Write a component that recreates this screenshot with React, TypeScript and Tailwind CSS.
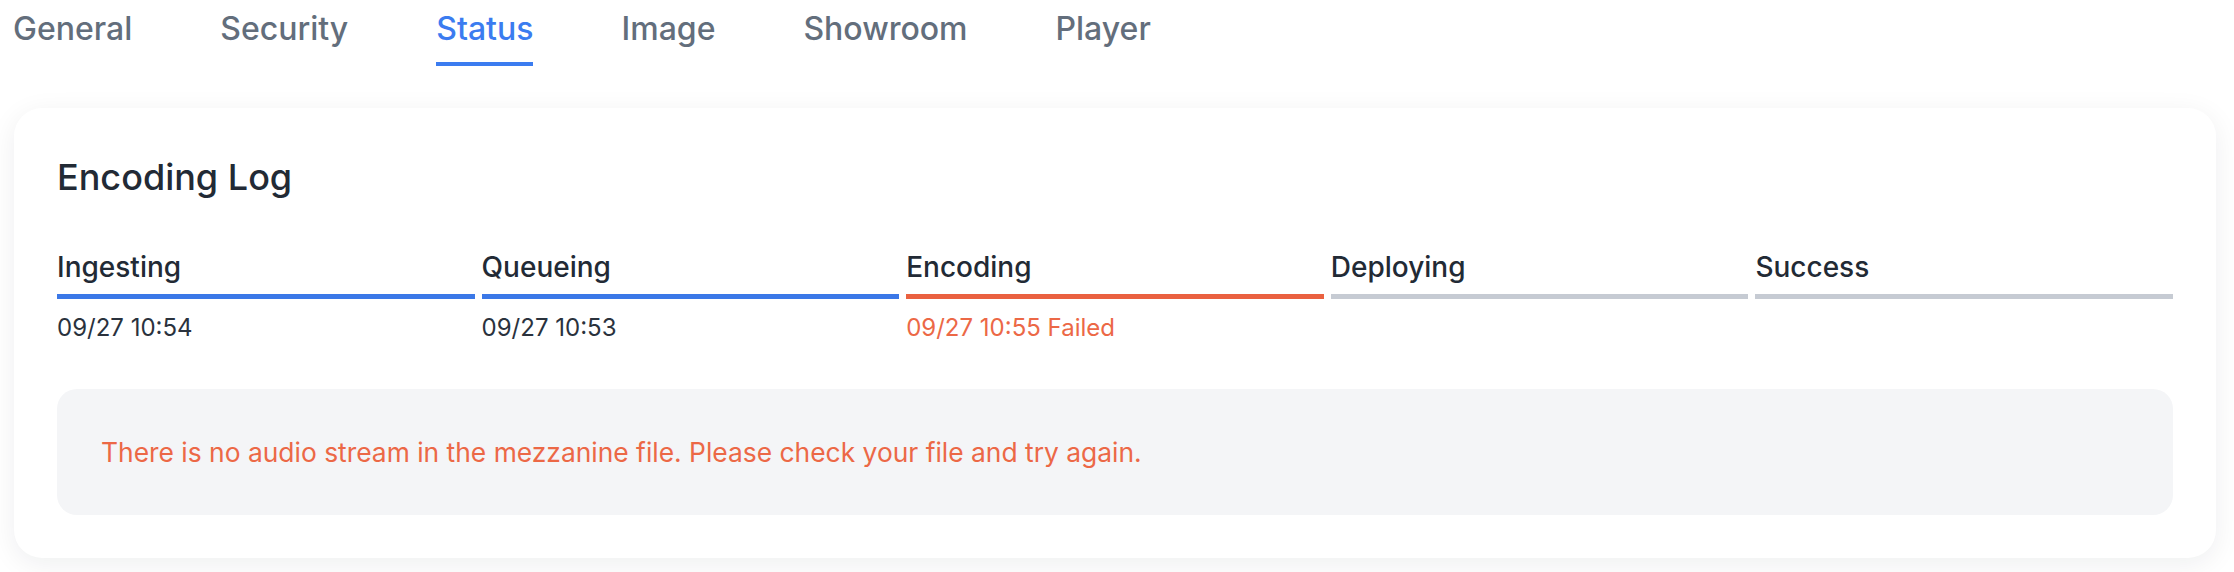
import React from "react";

type Step = {
  label: string;
  time?: string;
  state: "done" | "failed" | "pending";
};

const tabs = ["General", "Security", "Status", "Image", "Showroom", "Player"];

const steps: Step[] = [
  { label: "Ingesting", time: "09/27 10:54", state: "done" },
  { label: "Queueing", time: "09/27 10:53", state: "done" },
  { label: "Encoding", time: "09/27 10:55 Failed", state: "failed" },
  { label: "Deploying", state: "pending" },
  { label: "Success", state: "pending" },
];

function StepColumn({ step }: { step: Step }) {
  const barColor =
    step.state === "done"
      ? "bg-[#3b78e7]"
      : step.state === "failed"
        ? "bg-[#ea6140]"
        : "bg-[#c6cbd3]";

  return (
    <div className="flex flex-col">
      <div className="text-[28px] leading-[36px] font-medium text-[#222a35]">
        {step.label}
      </div>
      <div className={`mt-[9px] h-[5px] w-full ${barColor}`} />
      <div
        className={`mt-[13px] h-[32px] text-[24px] leading-[32px] ${
          step.state === "failed" ? "text-[#ec6846]" : "text-[#2a323d]"
        }`}
      >
        {step.time}
      </div>
    </div>
  );
}

export default function App() {
  const active = "Status";

  return (
    <div
      className="w-[2234px] h-[572px] overflow-hidden bg-white"
      style={{ fontFamily: "Inter, 'Noto Sans', 'Liberation Sans', sans-serif" }}
    >
      {/* タブ */}
      <div className="flex gap-[88px] pl-[13px] pt-[9px]">
        {tabs.map((tab) => (
          <div key={tab} className="flex flex-col">
            <span
              className={`text-[32px] leading-[40px] font-medium ${
                tab === active ? "text-[#3b7cf0]" : "text-[#636e7c]"
              }`}
            >
              {tab}
            </span>
            <div
              className={`mt-[13px] h-[4px] w-full ${
                tab === active ? "bg-[#3b7cf0]" : "bg-transparent"
              }`}
            />
          </div>
        ))}
      </div>

      {/* Encoding Log カード */}
      <div className="mt-[42px] ml-[14px] mr-[18px] rounded-[28px] bg-white px-[43px] pt-[47px] pb-[43px] shadow-[0_6px_28px_rgba(15,23,42,0.07)]">
        <h2 className="text-[36px] leading-[44px] font-medium text-[#222a35]">
          Encoding Log
        </h2>

        <div className="mt-[50px] grid grid-cols-5 gap-x-[7px]">
          {steps.map((step) => (
            <StepColumn key={step.label} step={step} />
          ))}
        </div>

        <div className="mt-[45px] flex h-[126px] items-center rounded-[20px] bg-[#f4f5f7] pl-[44px]">
          <p className="text-[26.4px] leading-[36px] text-[#ec6846]">
            There is no audio stream in the mezzanine file. Please check your
            file and try again.
          </p>
        </div>
      </div>
    </div>
  );
}
